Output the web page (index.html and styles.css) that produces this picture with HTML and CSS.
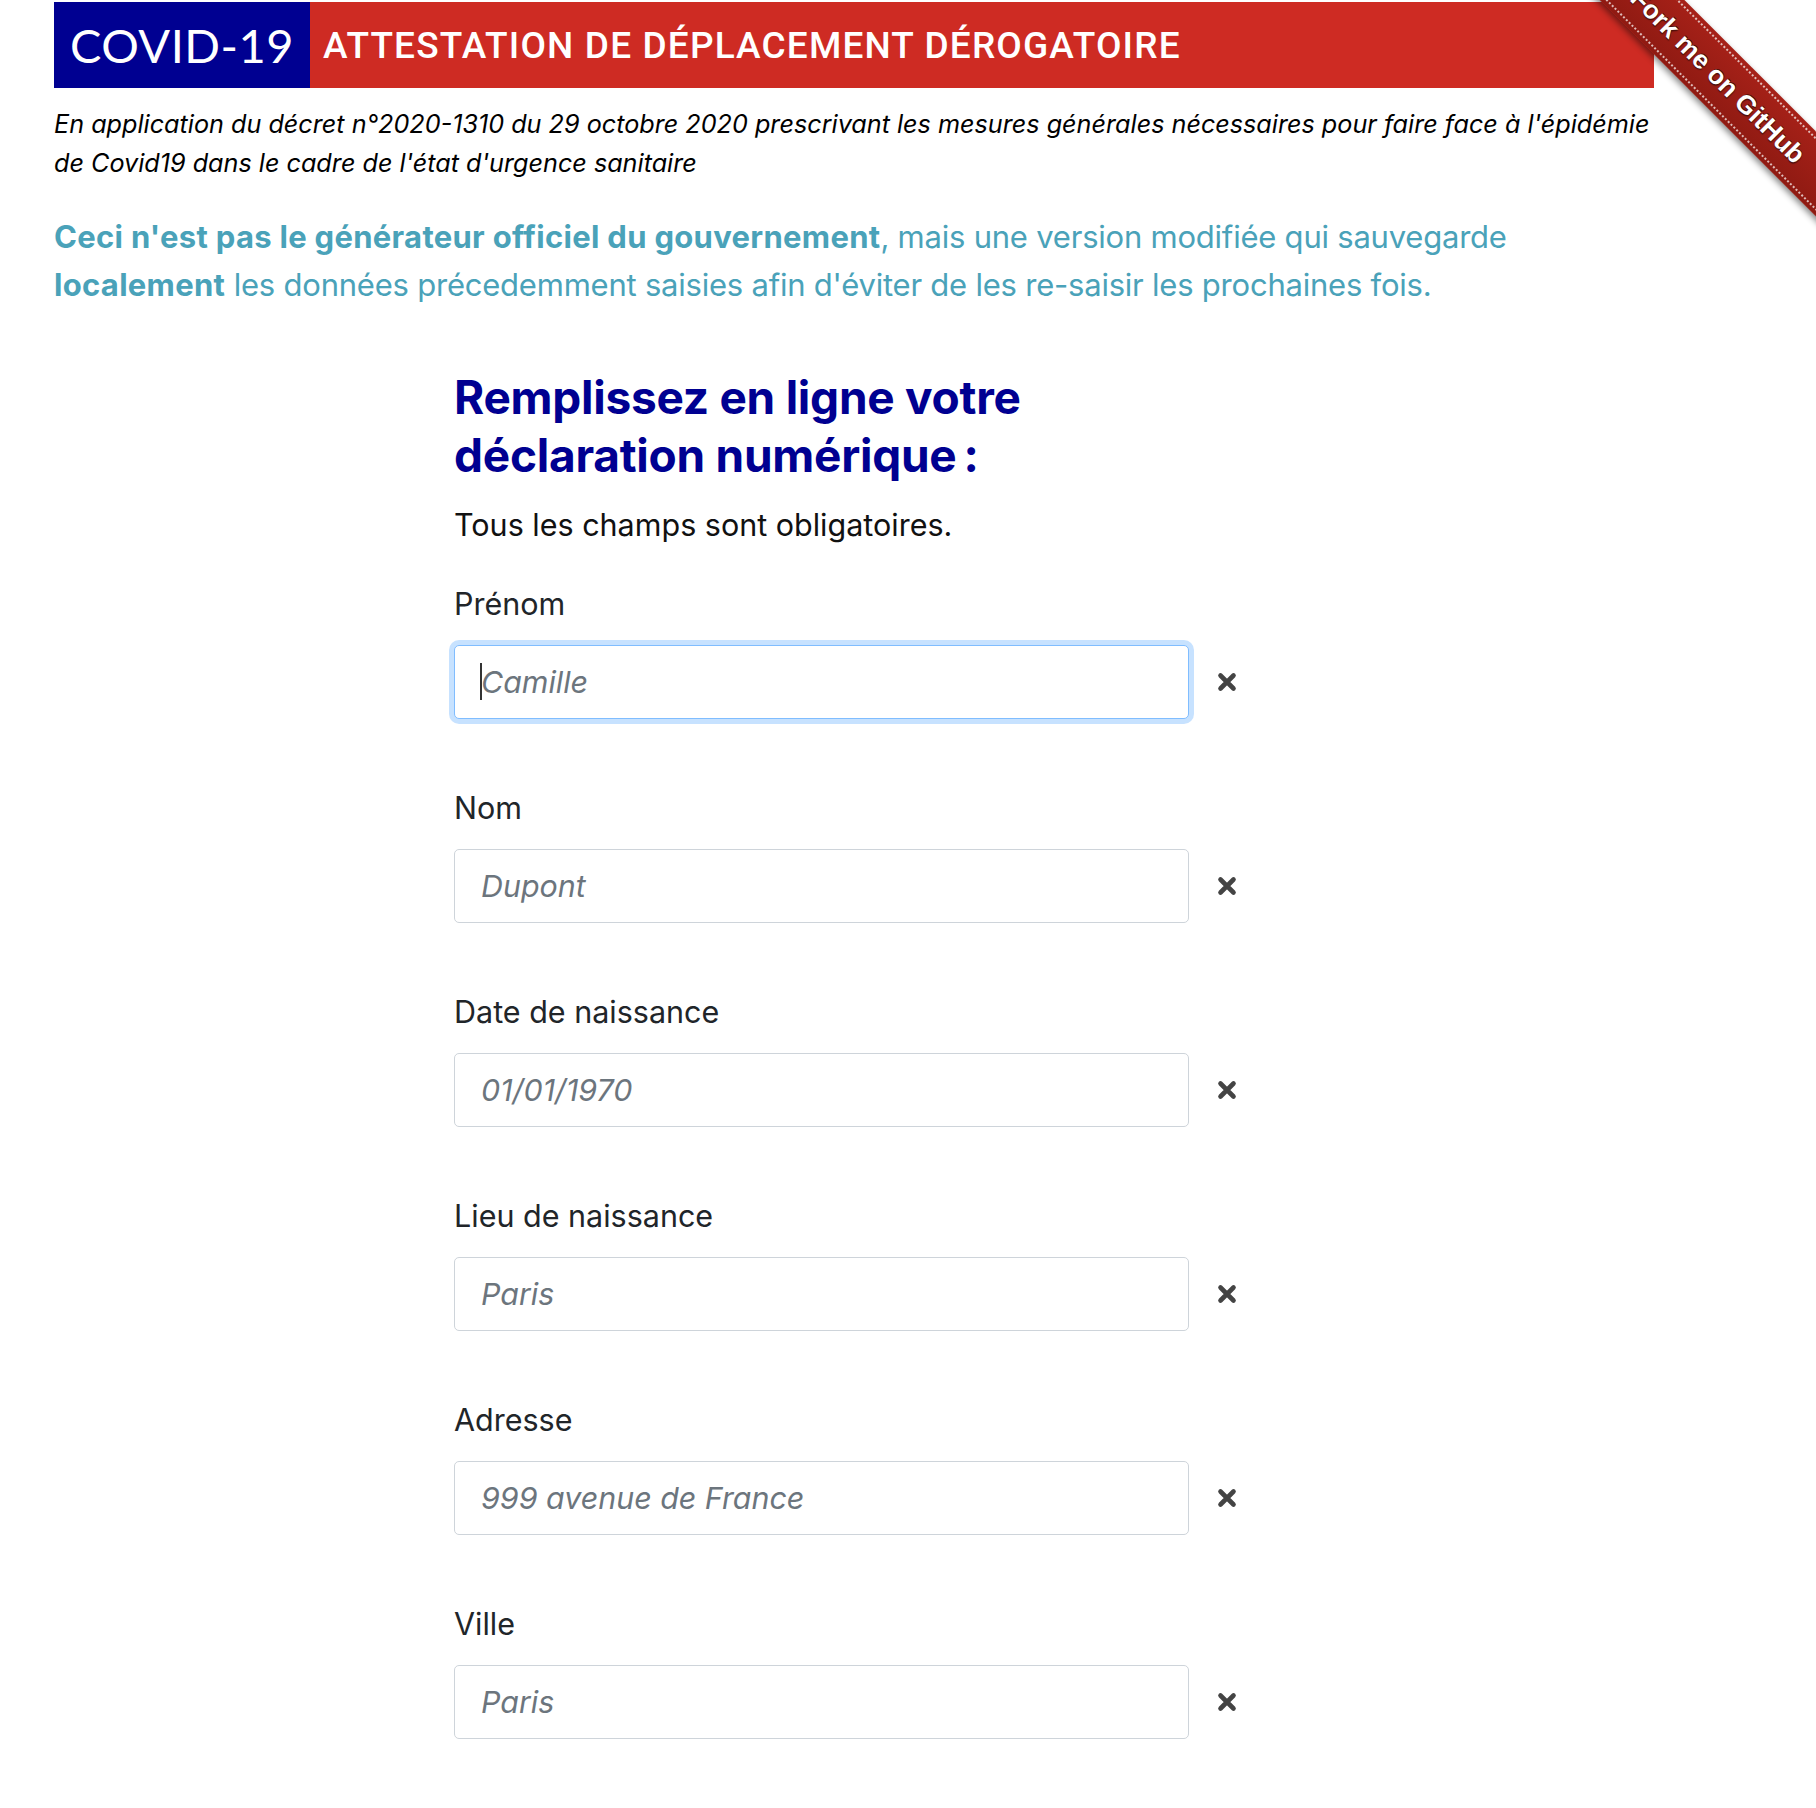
FILE: index.html
```html
<!DOCTYPE html>
<html lang="fr">
<head>
<meta charset="utf-8">
<title>Attestation de déplacement dérogatoire</title>
<link rel="stylesheet" href="styles.css">
</head>
<body>
<div class="page">
  <header class="banner">
    <div class="covid">COVID-19</div>
    <div class="title">ATTESTATION DE DÉPLACEMENT DÉROGATOIRE</div>
  </header>
  <p class="decree">En application du décret n°2020-1310 du 29 octobre 2020 prescrivant les mesures générales nécessaires pour faire face à l'épidémie<br>de Covid19 dans le cadre de l'état d'urgence sanitaire</p>
  <p class="notice"><strong>Ceci n'est pas le générateur officiel du gouvernement</strong>, mais une version modifiée qui sauvegarde<br><strong>localement</strong> les données précedemment saisies afin d'éviter de les re-saisir les prochaines fois.</p>

  <main class="form-col">
    <h2 class="form-title">Remplissez en ligne votre<br>déclaration numérique&#8239;:</h2>
    <p class="required">Tous les champs sont obligatoires.</p>

    <div class="fields">
      <div class="field">
        <label class="label" for="firstname">Prénom</label>
        <div class="row">
          <div class="input-wrap">
            <input class="input is-focused" id="firstname" type="text" placeholder="Camille">
            <span class="caret"></span>
          </div>
          <svg class="clear" viewBox="0 0 20 20"><path d="M3.5 3.5 L16.5 16.5 M16.5 3.5 L3.5 16.5"/></svg>
        </div>
      </div>
      <div class="field">
        <label class="label" for="lastname">Nom</label>
        <div class="row">
          <div class="input-wrap"><input class="input" id="lastname" type="text" placeholder="Dupont"></div>
          <svg class="clear" viewBox="0 0 20 20"><path d="M3.5 3.5 L16.5 16.5 M16.5 3.5 L3.5 16.5"/></svg>
        </div>
      </div>
      <div class="field">
        <label class="label" for="birthday">Date de naissance</label>
        <div class="row">
          <div class="input-wrap"><input class="input" id="birthday" type="text" placeholder="01/01/1970"></div>
          <svg class="clear" viewBox="0 0 20 20"><path d="M3.5 3.5 L16.5 16.5 M16.5 3.5 L3.5 16.5"/></svg>
        </div>
      </div>
      <div class="field">
        <label class="label" for="placeofbirth">Lieu de naissance</label>
        <div class="row">
          <div class="input-wrap"><input class="input" id="placeofbirth" type="text" placeholder="Paris"></div>
          <svg class="clear" viewBox="0 0 20 20"><path d="M3.5 3.5 L16.5 16.5 M16.5 3.5 L3.5 16.5"/></svg>
        </div>
      </div>
      <div class="field">
        <label class="label" for="address">Adresse</label>
        <div class="row">
          <div class="input-wrap"><input class="input" id="address" type="text" placeholder="999 avenue de France"></div>
          <svg class="clear" viewBox="0 0 20 20"><path d="M3.5 3.5 L16.5 16.5 M16.5 3.5 L3.5 16.5"/></svg>
        </div>
      </div>
      <div class="field">
        <label class="label" for="city">Ville</label>
        <div class="row">
          <div class="input-wrap"><input class="input" id="city" type="text" placeholder="Paris"></div>
          <svg class="clear" viewBox="0 0 20 20"><path d="M3.5 3.5 L16.5 16.5 M16.5 3.5 L3.5 16.5"/></svg>
        </div>
      </div>
    </div>
  </main>
</div>

<div class="ribbon-wrap">
  <a class="ribbon" href="#">Fork me on GitHub</a>
</div>
</body>
</html>
```
FILE: styles.css
```css
html, body {
  margin: 0;
  padding: 0;
  background: #fff;
}

body {
  font-family: Inter, "Noto Sans", sans-serif;
  color: #212529;
  overflow: hidden;
}

.page {
  width: 1600px;
  margin-left: 54px;
  padding-top: 2px;
}

/* Banner */
.banner {
  display: flex;
  height: 86px;
}

.covid {
  width: 256px;
  background: #000091;
  color: #fff;
  font-family: Lato, "Open Sans", sans-serif;
  font-size: 47px;
  display: flex;
  align-items: center;
  justify-content: center;
  letter-spacing: 0.5px;
}

.title {
  flex: 1;
  background: #ce2b23;
  color: #fff;
  font-family: Roboto, "Liberation Sans", sans-serif;
  font-weight: 500;
  font-size: 37px;
  letter-spacing: 1.15px;
  display: flex;
  align-items: center;
  padding-left: 13px;
}

/* Intro text */
.decree {
  margin: 17px 0 0;
  font-style: italic;
  font-size: 25.2px;
  line-height: 38.5px;
  color: #000;
  white-space: nowrap;
}

.notice {
  margin: 31px 0 0;
  font-size: 31px;
  line-height: 48px;
  color: #4aa2b9;
  letter-spacing: -0.22px;
  white-space: nowrap;
}

.notice strong {
  font-weight: 700;
  letter-spacing: 0.3px;
}

/* Form */
.form-col {
  width: 800px;
  margin: 59px auto 0;
}

.form-title {
  margin: 0;
  font-size: 46px;
  line-height: 58px;
  font-weight: 700;
  color: #000091;
  letter-spacing: -0.25px;
}

.required {
  margin: 20px 0 0;
  font-size: 30.5px;
  line-height: 42px;
  color: #111;
}

.fields {
  display: flex;
  flex-direction: column;
  gap: 68px;
  margin-top: 37px;
  padding-bottom: 60px;
}

.label {
  display: block;
  font-size: 30.5px;
  line-height: 42px;
  margin-bottom: 20px;
  color: #212529;
}

.row {
  display: flex;
  align-items: center;
}

.input-wrap {
  position: relative;
  width: 735px;
}

.input {
  display: block;
  width: 100%;
  height: 74px;
  box-sizing: border-box;
  border: 1px solid #ced4da;
  border-radius: 5px;
  padding: 0 26px;
  font-family: Inter, "Noto Sans", sans-serif;
  font-size: 30.4px;
  color: #495057;
  background: #fff;
  outline: none;
}

.input::placeholder {
  color: #6c757d;
  font-style: italic;
  opacity: 1;
}

.input.is-focused {
  border-color: #80bdff;
  box-shadow: 0 0 0 5px rgba(0, 123, 255, 0.22);
}

.caret {
  position: absolute;
  left: 26px;
  top: 18px;
  width: 2px;
  height: 37px;
  background: #333;
}

.clear {
  width: 20px;
  height: 20px;
  margin-left: 28px;
  fill: none;
  stroke: #444;
  stroke-width: 4.6;
  stroke-linecap: round;
}

/* GitHub ribbon */
.ribbon-wrap {
  position: absolute;
  top: 0;
  right: 0;
  width: 240px;
  height: 240px;
  overflow: hidden;
}

.ribbon {
  position: absolute;
  left: -58px;
  top: 46px;
  width: 400px;
  height: 60px;
  box-sizing: border-box;
  transform: rotate(45deg);
  background: linear-gradient(to bottom, #a62118, #8f1a12);
  box-shadow: 0 3px 6px rgba(0, 0, 0, 0.45);
  color: #fff;
  font-family: "Liberation Sans", Arial, sans-serif;
  font-weight: 700;
  font-size: 26px;
  line-height: 60px;
  text-align: center;
  text-decoration: none;
  text-shadow: 0 -1px 0 rgba(0, 0, 0, 0.6), 1px 1px 1px rgba(0, 0, 0, 0.5);
}

.ribbon::before {
  content: "";
  position: absolute;
  left: 0;
  right: 0;
  top: 4px;
  bottom: 4px;
  border-top: 2px dotted rgba(255, 255, 255, 0.7);
  border-bottom: 2px dotted rgba(255, 255, 255, 0.7);
}
```
